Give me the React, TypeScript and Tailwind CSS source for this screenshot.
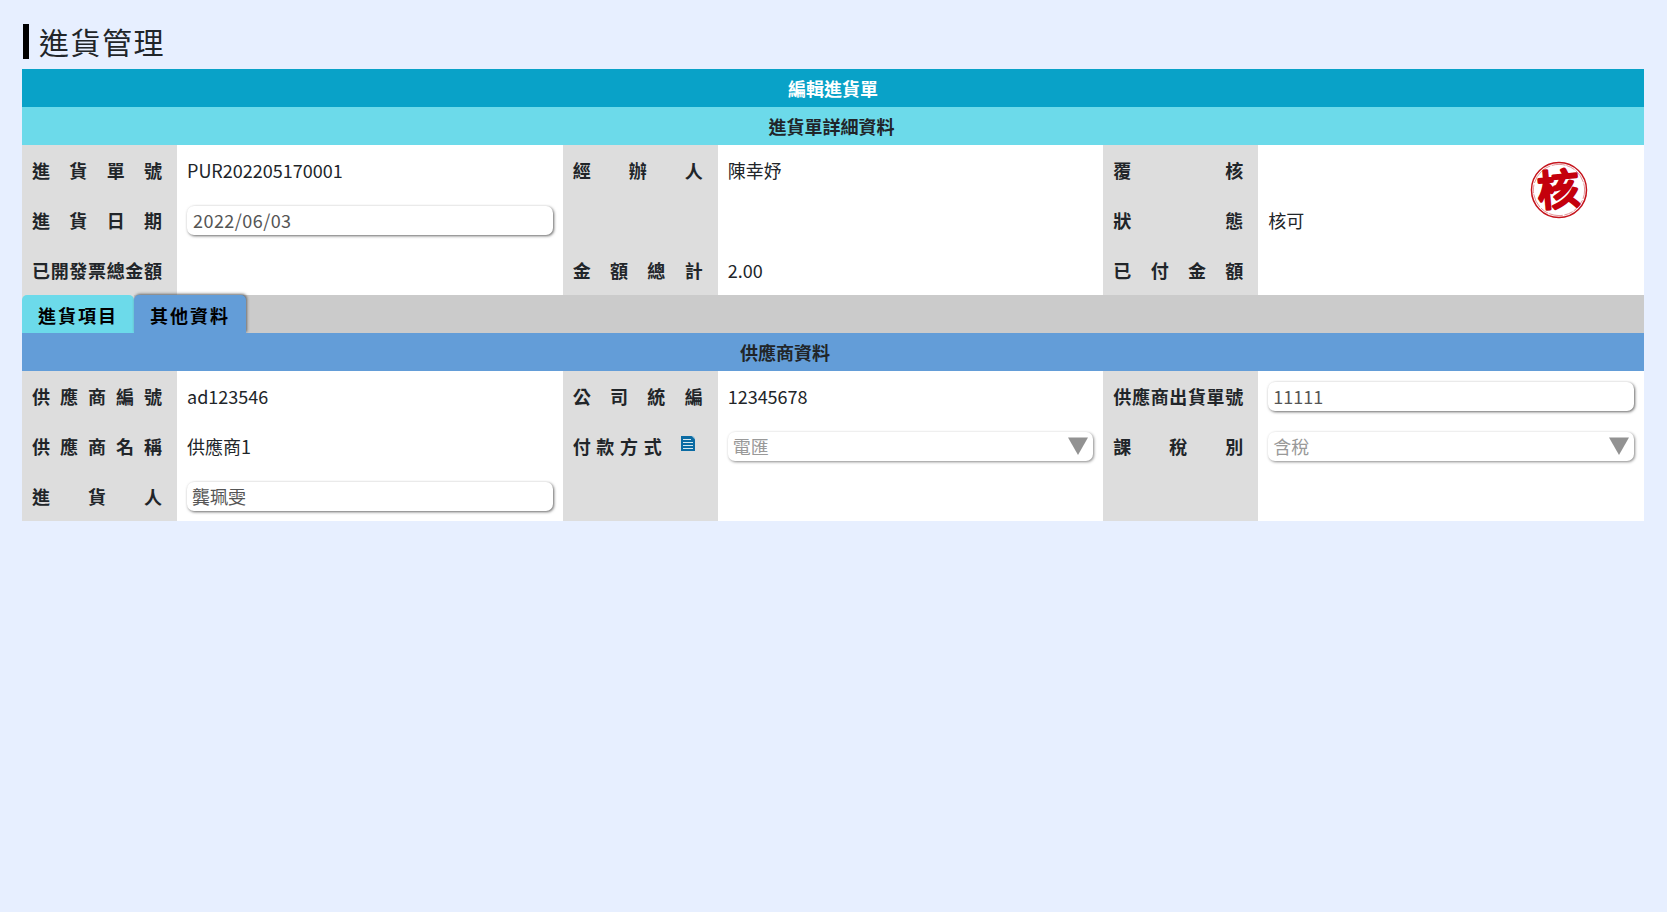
import React from "react";

function Label({ text, icon }: { text: string; icon?: boolean }) {
  return (
    <div className="flex h-[50px] items-center pl-2.5 font-bold">
      <div className={icon ? "flex w-[89px] justify-between" : "flex w-[130px] justify-between"}>
        {Array.from(text).map((c, i) => (
          <span key={i}>{c}</span>
        ))}
      </div>
      {icon && (
        <svg className="mb-[5px] ml-[19.5px] h-[15px] w-[14px]" viewBox="0 0 14 15">
          <path d="M0 0H11.5L14 2.5V15H0Z" fill="#0b6ba3" />
          <path d="M10.5 0L14 3.5V2.5L11.5 0Z" fill="#9cc6dc" />
          <path d="M2 3.5H10M2 6.5H12M2 9.5H12M2 12.5H12" stroke="#d5e8f0" strokeWidth="1.1" />
        </svg>
      )}
    </div>
  );
}

function Value({ children }: { children?: React.ReactNode }) {
  return <div className="flex h-[50px] items-center px-2.5">{children}</div>;
}

function Field({ text, className = "pl-[5px]" }: { text: string; className?: string }) {
  return (
    <div
      className={
        "mt-px flex h-[29px] w-full items-center rounded-[7px] bg-white pb-px text-[#555] shadow-[1px_1px_3px_#666] " +
        className
      }
    >
      <span>{text}</span>
    </div>
  );
}

function Select({ text }: { text: string }) {
  return (
    <div className="mt-px flex h-[29px] w-full items-center justify-between rounded-[7px] bg-white pr-[5px] pb-px pl-[5px] text-[#999] shadow-[1px_1px_3px_#888]">
      <span>{text}</span>
      <svg className="h-[18px] w-5" viewBox="0 0 20 18">
        <path d="M0 0.5H20L10 18Z" fill="#929292" />
      </svg>
    </div>
  );
}

function Group({ labels, children }: { labels: React.ReactNode; children: React.ReactNode }) {
  return (
    <div className="flex h-[150px]">
      <div className="w-[155px] shrink-0 bg-[#ddd]">{labels}</div>
      <div className="min-w-0 flex-1 bg-white">{children}</div>
    </div>
  );
}

function Stamp() {
  return (
    <svg className="absolute top-[16px] right-[56px] h-[58px] w-[58px] overflow-visible" viewBox="0 0 58 58">
      <circle cx="29" cy="29" r="27.5" fill="none" stroke="#c5141c" strokeWidth="1.5" />
      <circle cx="29" cy="29" r="25.6" fill="none" stroke="#d8666b" strokeWidth="0.7" strokeDasharray="9 1.5 14 1" />
      <text
        x="28.5"
        y="44"
        textAnchor="middle"
        fontSize="42"
        fontWeight="400"
        fill="#c4000c"
        stroke="#c4000c"
        strokeWidth="3"
        strokeLinejoin="round"
        strokeLinecap="round"
        transform="rotate(-5 29 29)"
      >
        核
      </text>
    </svg>
  );
}

export default function App() {
  return (
    <div className="min-h-screen bg-[#e7efff] pt-6 pr-[23px] pl-[22px] font-['Noto_Sans_CJK_TC',sans-serif] text-[18px] leading-[26px] text-[#212529]">
      <h1 className="mb-2.5 ml-px flex h-[35px] items-center border-l-[6px] border-black pb-[1px] pl-2.5 text-[30px] tracking-[1.5px]">
        進貨管理
      </h1>

      <div className="flex h-[38px] items-center justify-center bg-[#09a2c8] font-bold text-white">編輯進貨單</div>
      <div className="flex h-[38px] items-center justify-center bg-[#6cdaea] pr-[3px] font-bold">進貨單詳細資料</div>

      <div className="relative grid grid-cols-3">
        <Group labels={<><Label text="進貨單號" /><Label text="進貨日期" /><Label text="已開發票總金額" /></>}>
          <Value>PUR202205170001</Value>
          <Value><Field text="2022/06/03" className="pl-1.5 tracking-[0.45px]" /></Value>
          <Value />
        </Group>
        <Group labels={<><Label text="經辦人" /><Label text="" /><Label text="金額總計" /></>}>
          <Value>陳幸妤</Value>
          <Value />
          <Value>2.00</Value>
        </Group>
        <Group labels={<><Label text="覆核" /><Label text="狀態" /><Label text="已付金額" /></>}>
          <Value />
          <Value>核可</Value>
          <Value />
        </Group>
        <Stamp />
      </div>

      <div className="flex h-[38px] bg-[#cbcbcb] font-bold tracking-[2px] text-black">
        <div className="bg-[#ddd]">
          <div className="flex h-full w-28 items-center rounded-t-[5px] bg-[#6cdaea] pt-0.5 pl-4">進貨項目</div>
        </div>
        <div className="relative flex w-28 items-center rounded-t-[5px] bg-[#639dd8] pt-0.5 pl-4 shadow-[1px_-1px_3px_#666]">
          其他資料
        </div>
      </div>
      <div className="relative flex h-[38px] items-center justify-center bg-[#639dd8] pr-24 font-bold">供應商資料</div>

      <div className="grid grid-cols-3">
        <Group labels={<><Label text="供應商編號" /><Label text="供應商名稱" /><Label text="進貨人" /></>}>
          <Value>ad123546</Value>
          <Value>供應商1</Value>
          <Value><Field text="龔珮雯" /></Value>
        </Group>
        <Group labels={<><Label text="公司統編" /><Label text="付款方式" icon /></>}>
          <Value>12345678</Value>
          <Value><Select text="電匯" /></Value>
        </Group>
        <Group labels={<><Label text="供應商出貨單號" /><Label text="課稅別" /></>}>
          <Value><Field text="11111" /></Value>
          <Value><Select text="含稅" /></Value>
        </Group>
      </div>
    </div>
  );
}
